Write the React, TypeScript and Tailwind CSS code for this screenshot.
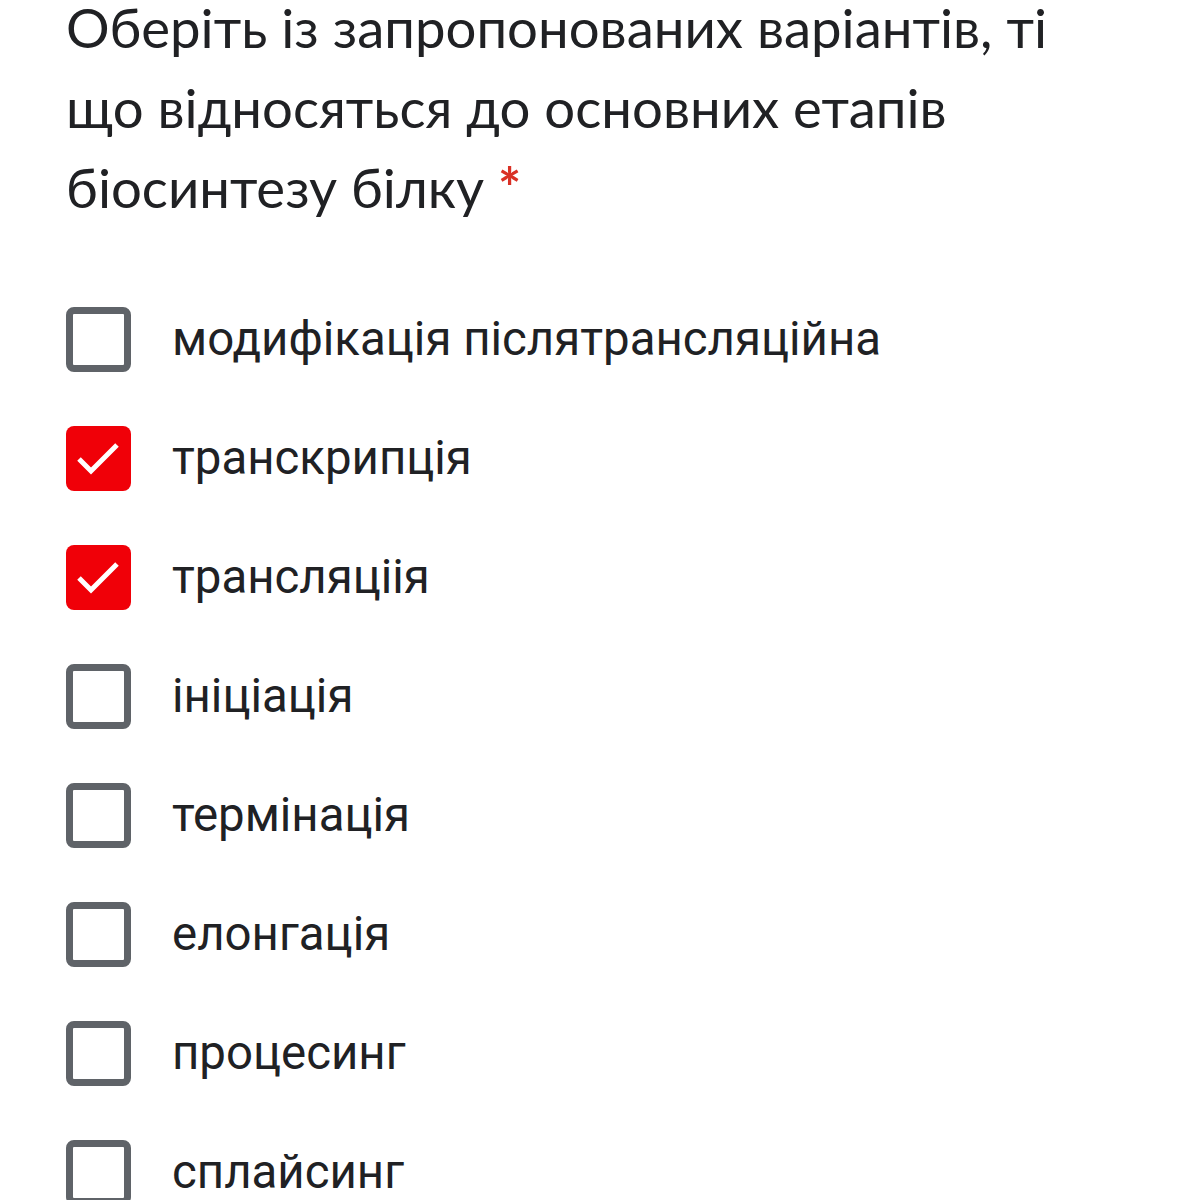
import React from 'react';

const options: { label: string; checked: boolean }[] = [
  { label: 'модифікація післятрансляційна', checked: false },
  { label: 'транскрипція', checked: true },
  { label: 'трансляціія', checked: true },
  { label: 'ініціація', checked: false },
  { label: 'термінація', checked: false },
  { label: 'елонгація', checked: false },
  { label: 'процесинг', checked: false },
  { label: 'сплайсинг', checked: false },
];

const Checkbox: React.FC<{ checked: boolean }> = ({ checked }) =>
  checked ? (
    <div className="w-[65px] h-[65px] rounded-[8px] bg-[#f00008] shrink-0">
      <svg width="65" height="65" viewBox="0 0 65 65" fill="none">
        <path d="M13 33l12 12 26-26" stroke="#fff" strokeWidth="5" />
      </svg>
    </div>
  ) : (
    <div className="w-[65px] h-[65px] rounded-[8px] border-[7px] border-[#5f6368] bg-white shrink-0" />
  );

export default function App() {
  return (
    <div className="w-[1197px] h-[1200px] overflow-hidden bg-white pl-[66px]">
      <h1
        className="text-[#202124] text-[54.5px] leading-[80px] -mt-[13px] whitespace-nowrap"
        style={{ fontFamily: 'Lato, "Open Sans", sans-serif' }}
      >
        Оберіть із запропонованих варіантів, ті
        <br />
        що відносяться до основних етапів
        <br />
        біосинтезу білку <span className="text-[#d93025] font-bold">*</span>
      </h1>
      <ul className="mt-[80px] flex flex-col gap-[54px]">
        {options.map((o) => (
          <li key={o.label} className="flex items-center gap-[41px]">
            <Checkbox checked={o.checked} />
            <span className="text-[#202124] text-[47.4px] leading-none" style={{ fontFamily: 'Roboto, sans-serif' }}>
              {o.label}
            </span>
          </li>
        ))}
      </ul>
    </div>
  );
}
